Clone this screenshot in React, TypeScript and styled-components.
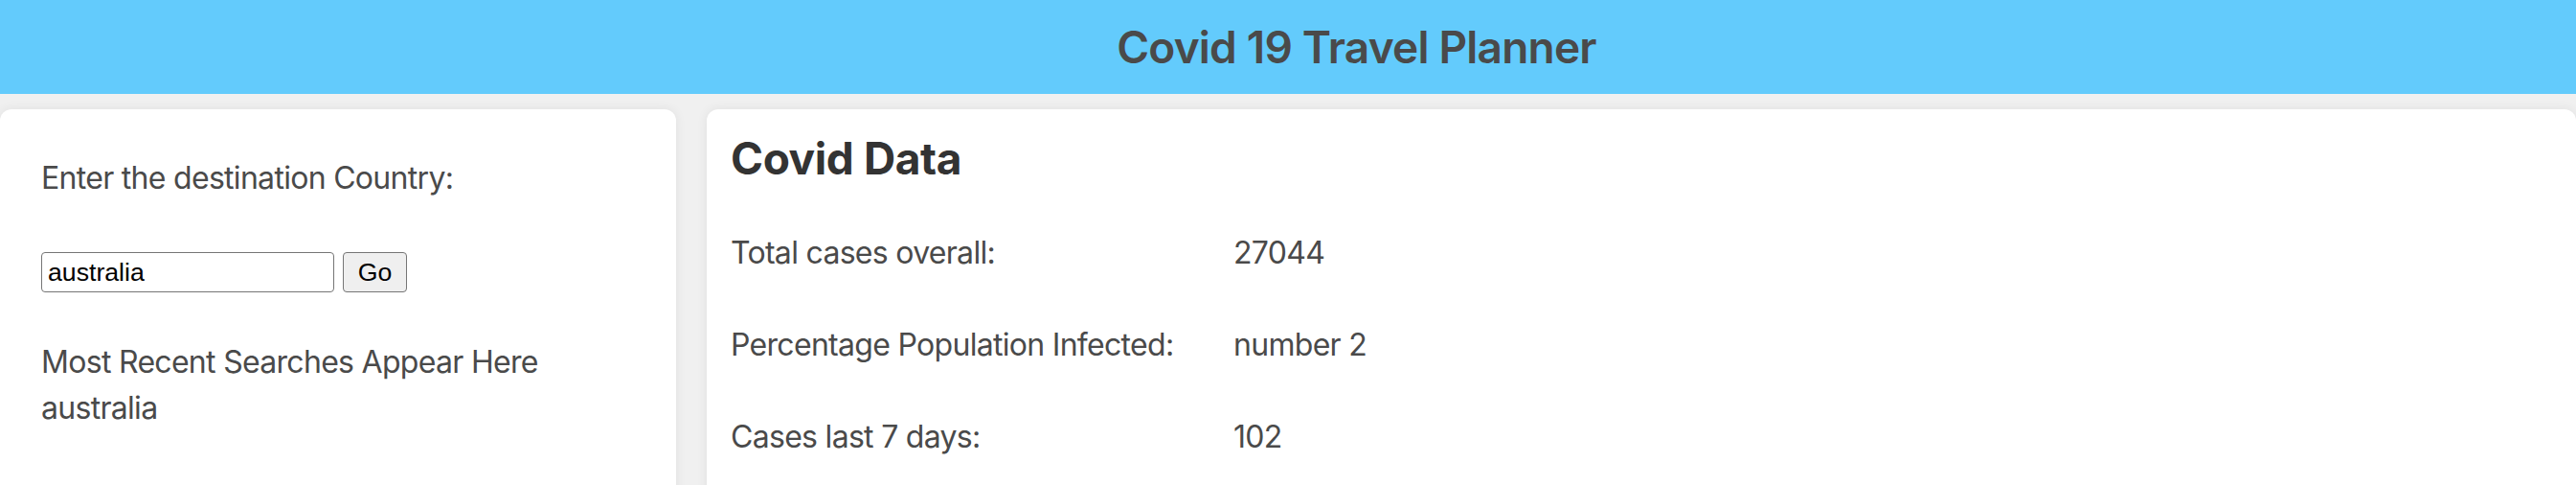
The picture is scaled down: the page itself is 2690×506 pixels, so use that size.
import React from 'react';
import styled, { createGlobalStyle } from 'styled-components';

const GlobalStyle = createGlobalStyle`
  html, body {
    margin: 0;
    padding: 0;
    background: #f0f0f0;
  }
  body {
    font-family: Inter, "Noto Sans", sans-serif;
    color: #4a4a4a;
    overflow: hidden;
  }
  * { box-sizing: border-box; }
`;

const Page = styled.div`
  width: 2690px;
  height: 506px;
  overflow: hidden;
  background: #f0f0f0;
`;

const Header = styled.header`
  height: 98px;
  background: #63cbfc;
  display: flex;
  align-items: center;
  justify-content: center;
  padding-left: 143px;
`;

const Title = styled.h1`
  margin: 0;
  font-size: 46px;
  line-height: 58px;
  font-weight: 600;
  letter-spacing: -0.8px;
  color: #4a4a4a;
`;

const Main = styled.main`
  display: grid;
  grid-template-columns: 706px 1fr;
  gap: 32px;
  padding-top: 16px;
`;

const Card = styled.section<{ $pad: string }>`
  background: #ffffff;
  border-radius: 12px;
  box-shadow: 0 0 12px rgba(0, 0, 0, 0.07);
  min-height: 440px;
  padding: ${(p) => p.$pad};
`;

const Text = styled.p`
  margin: 0;
  font-size: 32px;
  line-height: 48px;
  letter-spacing: -0.7px;
  color: #4a4a4a;
`;

const SearchRow = styled.form`
  display: flex;
  gap: 9px;
  margin: 53px 0 49px;
`;

const Input = styled.input`
  width: 306px;
  height: 42px;
  border: 1px solid #767676;
  border-radius: 4px;
  padding: 0 6px;
  font-family: "Liberation Sans", Arial, sans-serif;
  font-size: 26.67px;
  color: #000;
  background: #fff;
`;

const GoButton = styled.button`
  width: 67px;
  height: 42px;
  border: 1px solid #767676;
  border-radius: 4px;
  background: #efefef;
  font-family: "Liberation Sans", Arial, sans-serif;
  font-size: 26.67px;
  color: #000;
  padding: 0;
`;

const Heading = styled.h2`
  margin: 0 0 47px;
  font-size: 46px;
  line-height: 56px;
  font-weight: 700;
  letter-spacing: -0.4px;
  color: #333333;
`;

const DataList = styled.dl`
  margin: 0;
  display: grid;
  grid-template-columns: 525px auto;
  row-gap: 48px;
  justify-content: start;
`;

const Label = styled.dt`
  margin: 0;
  font-size: 32px;
  line-height: 48px;
  letter-spacing: -0.7px;
  color: #4a4a4a;
`;

const Value = styled.dd`
  margin: 0;
  font-size: 32px;
  line-height: 48px;
  letter-spacing: -0.7px;
  color: #4a4a4a;
`;

const rows = [
  { label: 'Total cases overall:', value: '27044' },
  { label: 'Percentage Population Infected:', value: 'number 2' },
  { label: 'Cases last 7 days:', value: '102' },
];

export default function App() {
  return (
    <Page>
      <GlobalStyle />
      <Header>
        <Title>Covid 19 Travel Planner</Title>
      </Header>
      <Main>
        <Card $pad="48px 43px">
          <Text>Enter the destination Country:</Text>
          <SearchRow onSubmit={(e) => e.preventDefault()}>
            <Input defaultValue="australia" />
            <GoButton type="submit">Go</GoButton>
          </SearchRow>
          <Text>Most Recent Searches Appear Here</Text>
          <Text>australia</Text>
        </Card>
        <Card $pad="23px 25px">
          <Heading>Covid Data</Heading>
          <DataList>
            {rows.map((r) => (
              <React.Fragment key={r.label}>
                <Label>{r.label}</Label>
                <Value>{r.value}</Value>
              </React.Fragment>
            ))}
          </DataList>
        </Card>
      </Main>
    </Page>
  );
}
